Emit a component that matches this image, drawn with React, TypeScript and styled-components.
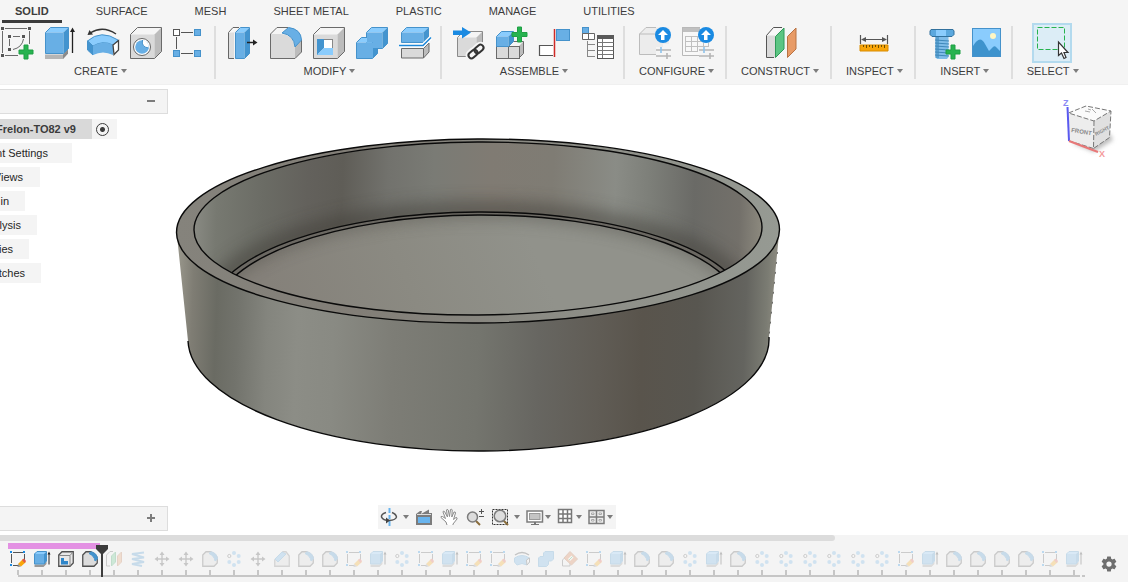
import React from "react";
import styled, { createGlobalStyle, css } from "styled-components";

const GlobalStyle = createGlobalStyle`
  * { box-sizing: border-box; }
  body {
    margin: 0;
    background: #ffffff;
    color: #3c3c3c;
    font-family: "Liberation Sans", Arial, sans-serif;
    font-size: 11px;
  }
  button {
    border: 0;
    margin: 0;
    padding: 0;
    background: none;
    color: inherit;
    font: inherit;
    cursor: pointer;
  }
  svg { display: block; overflow: visible; flex: none; }
`;

/* ---------- layout ---------- */

const Shell = styled.div`
  display: flex;
  flex-direction: column;
  min-height: 100vh;
  overflow: hidden;
`;

const Header = styled.header`
  background: #f5f5f5;
  border-bottom: 1px solid #f0f0f0;
`;

const Tabs = styled.nav`
  display: flex;
  gap: 21px;
  padding-left: 2px;
`;

const Tab = styled.button<{ $active?: boolean }>`
  height: 23px;
  padding: 2px 13px 0;
  line-height: 18px;
  white-space: nowrap;
  border-bottom: 3px solid ${(p) => (p.$active ? "#3c3c3c" : "transparent")};
  font-weight: ${(p) => (p.$active ? "bold" : "normal")};
`;

const Toolbar = styled.div`
  display: flex;
  padding: 3px 0 5px;
`;

const Group = styled.section<{ $cut?: boolean }>`
  display: flex;
  flex-direction: column;
  align-items: center;
  flex: none;
  height: 53px;
  border-right: 2px solid #dedede;
  &:last-child { border-right: 0; }
  ${(p) => p.$cut && css`margin-left: -16px; & > div { padding-left: 17px; }`}
`;

const GroupIcons = styled.div`
  display: flex;
  gap: 11px;
  padding: 1px 9px 0 11px;
`;

const ToolButton = styled.button<{ $selected?: boolean }>`
  display: block;
  width: 32px;
  height: 32px;
  ${(p) =>
    p.$selected &&
    css`
      background: #dcedf6;
      box-shadow: 0 0 0 2px #dcedf6, 0 0 0 4px #b3daee;
    `}
`;

const GroupLabel = styled.button`
  display: flex;
  align-items: center;
  gap: 3px;
  height: 16px;
  margin-top: 4px;
  padding: 0 11px 0 14px;
  white-space: nowrap;
`;

const Canvas = styled.main`
  flex: 1;
  display: flex;
  flex-direction: column;
  justify-content: space-between;
  padding: 4px 0;
`;

const Stage = styled.div`
  display: flex;
  align-items: flex-start;
`;

const Browser = styled.aside`
  width: 168px;
  flex: none;
`;

const PanelBar = styled.div`
  display: flex;
  align-items: center;
  justify-content: flex-end;
  width: 168px;
  height: 25px;
  padding-right: 11px;
  background: #f4f4f4;
  border: 1px solid #dddddd;
  border-left: 0;
`;

const Tree = styled.ul`
  display: flex;
  flex-direction: column;
  gap: 4px;
  margin: 5px 0 0;
  padding: 0;
  list-style: none;
`;

const TreeRow = styled.li`
  display: flex;
  height: 20px;
`;

const TreeLabel = styled.button<{ $width: number; $pad: number; $root?: boolean }>`
  display: flex;
  align-items: center;
  justify-content: flex-end;
  overflow: hidden;
  width: ${(p) => p.$width}px;
  padding-right: ${(p) => p.$pad}px;
  background: ${(p) => (p.$root ? "#d9d9d9" : "#f4f4f4")};
  font-weight: ${(p) => (p.$root ? "bold" : "normal")};
  white-space: nowrap;
  color: ${(p) => (p.$root ? "#3c3c3c" : "#262626")};
`;

const Activate = styled.label`
  display: flex;
  align-items: center;
  width: 25px;
  padding-left: 4px;
  background: #f4f4f4;
  input {
    appearance: none;
    width: 13px;
    height: 13px;
    margin: 0;
    border: 1px solid #3c3c3c;
    border-radius: 50%;
    background: radial-gradient(circle, #3c3c3c 2px, transparent 3px);
  }
`;

const ModelArea = styled.div`
  flex: 1;
  padding: 41px 0 0 2px;
`;

const CubeArea = styled.div`
  padding: 5px 10px 0 0;
`;

const BottomRow = styled.div`
  display: flex;
  align-items: flex-end;
  height: 26px;
`;

const ViewBar = styled.div`
  display: flex;
  align-items: center;
  align-self: flex-start;
  gap: 6px;
  height: 24px;
  margin-left: 210px;
  padding: 0 3px 0 2px;
  background: #f4f4f4;
`;

const ViewButton = styled.button<{ $gap?: number; $roomy?: boolean }>`
  display: flex;
  align-items: center;
  gap: ${(p) => p.$gap ?? 1}px;
  padding: 0 ${(p) => (p.$roomy ? 1 : 0)}px;
`;

const Footer = styled.footer`
  background: #f4f4f4;
  height: 47px;
`;

const ScrollThumb = styled.div`
  width: 74%;
  height: 6px;
  background: #dcdcdc;
  border-radius: 0 3px 3px 0;
`;

const TimelineRow = styled.div`
  display: flex;
  justify-content: space-between;
  padding-top: 2px;
`;

const Strip = styled.div`
  position: relative;
  flex: none;
  padding-left: 6px;
`;

const GroupBand = styled.div`
  width: 92px;
  height: 6px;
  margin-left: 2px;
  background: #e391e3;
`;

const Features = styled.ol`
  display: flex;
  margin: 0;
  padding: 2px 0 0;
  list-style: none;
`;

const Feature = styled.li`
  display: flex;
  flex-direction: column;
  align-items: center;
  gap: 3px;
  width: 24px;
  &::after {
    content: "";
    width: 2px;
    height: 5px;
    background: #c6c6c6;
  }
`;

const FeatureButton = styled.button<{ $pending: boolean }>`
  width: 16px;
  height: 16px;
  opacity: ${(p) => (p.$pending ? 0.25 : 1)};
`;

const Rail = styled.div`
  display: flex;
  gap: 2px;
  padding: 0 1px 0 12px;
  &::before { content: ""; flex: 1; height: 2px; background: #c6c6c6; }
  &::after { content: ""; width: 3px; height: 2px; background: #c6c6c6; }
`;

const Marker = styled.div`
  position: absolute;
  left: 96px;
  top: 2px;
`;

const SettingsButton = styled.button`
  width: 18px;
  height: 18px;
  margin: 12px 10px 0 0;
`;

/* ---------- shared drawing parts ---------- */

const B = { top: "#8accfd", mid: "#68afe5", dark: "#4394cf", line: "#4592cb" };
const G = { top: "#f5f5f5", mid: "#dadada", dark: "#bcbcbc", line: "#6a6a6a" };

const Caret = () => (
  <svg width="6" height="4" viewBox="0 0 6 4">
    <path d="M0 0H6L3 4Z" fill="#7c7c7c" />
  </svg>
);

type Palette = { top: string; mid: string; dark: string; line: string };

function Box({ x, y, w, h, d, c }: { x: number; y: number; w: number; h: number; d: number; c: Palette }) {
  return (
    <g>
      <path d={`M${x} ${y + d}l${d} ${-d}h${w}l${-d} ${d}z`} fill={c.top} />
      <path d={`M${x} ${y + d}h${w}v${h}h${-w}z`} fill={c.mid} />
      <path d={`M${x + w} ${y + d}l${d} ${-d}v${h}l${-d} ${d}z`} fill={c.dark} />
      <path d={`M${x} ${y + d}l${d} ${-d}h${w}v${h}l${-d} ${d}h${-w}z`} fill="none" stroke={c.line} />
    </g>
  );
}

const Plus = ({ x, y, s = 14 }: { x: number; y: number; s?: number }) => {
  const a = (s - 4) / 2;
  return (
    <path
      d={`M${x + a} ${y}h4v${a}h${a}v4h${-a}v${a}h-4v${-a}h${-a}v-4h${a}z`}
      fill="#27b34f"
      stroke="#1f9f45"
      strokeWidth="1"
    />
  );
};

const Svg32 = ({ children }: { children: React.ReactNode }) => (
  <svg width="32" height="32" viewBox="0 0 32 32">{children}</svg>
);
const Svg16 = ({ children }: { children: React.ReactNode }) => (
  <svg width="16" height="16" viewBox="0 0 16 16">{children}</svg>
);
const Svg18 = ({ children }: { children: React.ReactNode }) => (
  <svg width="18" height="18" viewBox="0 0 18 18">{children}</svg>
);

/* ---------- toolbar icons ---------- */

const SketchIcon = () => (
  <Svg32>
    <path d="M4 1.5H26M1.5 4V26M28.5 4V17M4 28.5H17" stroke="#6a6a6a" fill="none" />
    <path d="M12 9.5H19M8.5 12V19M22.5 12Q21 20.500 12 22.500" stroke="#6a6a6a" fill="none" />
    <path d="M0 0h3v3h-3zM27 0h3v3h-3zM0 27h3v3h-3zM7 8h3v3h-3zM21 8h3v3h-3zM7 21h3v3h-3z" fill="#555" />
    <Plus x={18} y={18} />
  </Svg32>
);

const ExtrudeIcon = () => (
  <Svg32>
    <path d="M1 27.500h18l5-5v4l-5 5.500h-18z" fill="#b5b5b5" />
    <path d="M19 27.500l5-5v4l-5 5.500z" fill="#8a8a8a" />
    <Box x={1.5} y={0.5} w={18} h={21} d={5} c={B} />
    <path d="M28.500 4V26" stroke="#222" strokeWidth="1.3" />
    <path d="M26 5L28.500 0.500L31 5z" fill="#222" />
  </Svg32>
);

const RevolveIcon = () => (
  <Svg32>
    <path d="M3 6Q16 -2 29 7" stroke="#333" fill="none" strokeWidth="1.400" />
    <path d="M0.500 8L2.500 3L6 7.500z" fill="#333" />
    <path d="M0.500 14Q14 2 31 13L26 18Q16 13 6 19z" fill={B.top} stroke={B.line} />
    <path d="M0.500 14L6 19V28L0.500 23z" fill={B.dark} stroke={B.line} />
    <path d="M6 19Q16 13 26 18V28Q16 23 6 28z" fill={B.mid} />
    <path d="M26 18L31.500 13.500V23L27 27.500z" fill="#fff" stroke="#444" strokeWidth="1.300" />
  </Svg32>
);

const HoleIcon = () => (
  <Svg32>
    <Box x={0.5} y={0.5} w={24} h={24} d={7} c={G} />
    <circle cx="12" cy="20" r="8.500" fill="#fff" stroke="#666" />
    <circle cx="12" cy="20" r="6.800" fill={B.mid} />
    <path d="M12.500 13Q11 20 18.600 21A6.800 6.800 0 0 0 12.500 13z" fill="#fff" />
    <path d="M12.500 13Q11 20 18.600 21" stroke={B.line} fill="none" />
  </Svg32>
);

const PatternIcon = () => (
  <Svg32>
    <path d="M8 5.500H20M8 26.500H20M3.500 10V22" stroke="#555" />
    <rect x="0.500" y="2.500" width="6" height="6" fill="#fff" stroke="#555" />
    <g fill={B.mid} stroke={B.line}>
      <rect x="21.500" y="2.500" width="6" height="6" />
      <rect x="0.500" y="23.500" width="6" height="6" />
      <rect x="21.500" y="23.500" width="6" height="6" />
    </g>
  </Svg32>
);

const PressPullIcon = () => (
  <Svg32>
    <path d="M1.500 5.500L6 0.500H13L7 5.500V31.500H1.500z" fill="#dedede" />
    <path d="M1.500 5.500L6 0.500H12L7 5.500z" fill="#f7f7f7" />
    <path d="M12 0.500H6L1.500 5.500V31.500H7" fill="none" stroke="#666" />
    <Box x={8.5} y={0.5} w={9} h={26} d={5} c={B} />
    <path d="M20 15.500H27" stroke="#222" strokeWidth="1.500" />
    <path d="M26 12.500L30.500 15.500L26 18.500z" fill="#222" />
  </Svg32>
);

const FilletIcon = () => (
  <Svg32>
    <path d="M0.500 7L7 0.500H19L12 6z" fill="#f5f5f5" />
    <path d="M0.500 7H11Q24 8 25 21V31.500H0.500z" fill={G.mid} />
    <path d="M25 20L31.500 13V25L25 31.500z" fill={G.dark} />
    <path d="M18 0.500H7L0.500 7V31.500H25L31.500 25V13" fill="none" stroke={G.line} />
    <path d="M12 6L18.500 0.500Q31 2 31.500 13L25 20Q24 8 12 6z" fill={B.mid} stroke={B.line} />
  </Svg32>
);

const ShellIcon = () => (
  <Svg32>
    <Box x={0.5} y={0.5} w={24} h={24} d={7} c={G} />
    <rect x="4.500" y="12.500" width="15" height="15" fill="#fff" stroke="#888" />
    <path d="M4 12H11V21L4 28z" fill={B.dark} />
    <path d="M11 21H20V28H4z" fill={B.top} />
  </Svg32>
);

const CombineIcon = () => (
  <Svg32>
    <Box x={10.5} y={0.5} w={16} h={16} d={5} c={B} />
    <Box x={0.5} y={10.5} w={16} h={16} d={5} c={B} />
    <path d="M11 6H26V21H17V15H11z" fill={B.mid} />
    <path d="M1 16H17V31H1z" fill={B.mid} />
  </Svg32>
);

const SplitIcon = () => (
  <Svg32>
    <path d="M2.500 21.500h22v9.500h-22z" fill={G.mid} stroke={G.line} />
    <path d="M24.500 21.500L30 16V25L24.500 31z" fill={G.dark} stroke={G.line} />
    <Box x={2.5} y={0.5} w={22} h={10} d={5} c={B} />
    <path d="M0 18.500H24L32 10.500" fill="none" stroke="#fff" strokeWidth="4" />
    <path d="M0 18.500H24L32 10.500" fill="none" stroke="#1b86d8" strokeWidth="1.500" />
  </Svg32>
);

const DeriveIcon = () => (
  <Svg32>
    <Box x={4.5} y={4.5} w={19} h={19} d={6} c={{ ...G, line: "#8a8a8a" }} />
    <path d="M0 3.500H9V0L18 5.500L9 11.500V8H0z" fill="#1a8ae2" />
    <g fill="none" stroke="#f5f5f5" strokeWidth="6">
      <rect x="15" y="24" width="10" height="6" rx="3" transform="rotate(-42 20 27)" />
      <rect x="21" y="19" width="10" height="6" rx="3" transform="rotate(-42 26 22)" />
    </g>
    <g fill="none" stroke="#333" strokeWidth="2">
      <rect x="15" y="24" width="10" height="6" rx="3" transform="rotate(-42 20 27)" />
      <rect x="21" y="19" width="10" height="6" rx="3" transform="rotate(-42 26 22)" />
    </g>
  </Svg32>
);

const NewComponentIcon = () => (
  <Svg32>
    <Box x={12.5} y={14.5} w={10} h={12} d={5} c={G} />
    <rect x="0.500" y="19.500" width="12" height="12" fill={G.mid} stroke={G.line} />
    <rect x="12.500" y="19.500" width="11" height="12" fill={G.mid} stroke={G.line} />
    <Box x={0.5} y={4.5} w={12} h={10} d={5} c={B} />
    <Plus x={16} y={0} s={15} />
  </Svg32>
);

const JointIcon = () => (
  <Svg32>
    <path d="M14 18.500H0.500V28.500H14" fill="#fff" stroke="#555" strokeWidth="1.200" />
    <path d="M15.500 2V30" stroke="#cf2a27" strokeWidth="1.500" />
    <rect x="17.500" y="2.500" width="13" height="11" fill={B.mid} stroke={B.line} />
  </Svg32>
);

const BomIcon = () => (
  <Svg32>
    <path d="M5.500 14V30M5.500 17.500H13M5.500 23.500H13M5.500 29.500H13" stroke="#888" fill="none" />
    <rect x="0.500" y="0.500" width="6" height="6" fill={B.mid} stroke={B.line} />
    <path d="M0.500 6.500h12v6h-12zM6.500 6.500v6" fill="#fff" stroke="#666" />
    <rect x="15.500" y="9" width="16" height="22.500" fill="#fff" stroke="#555" />
    <path d="M15 8h17v4h-17z" fill="#5a5a5a" />
    <path d="M15.500 15.500h16M15.500 19.500h16M15.500 23.500h16M15.500 27.500h16M20.500 12V31" stroke="#777" />
  </Svg32>
);

const Badge = () => (
  <g>
    <circle cx="24" cy="8" r="8" fill="#1a8ae2" />
    <path d="M24 3L29 8H25.500V13H22V8H19z" fill="#fff" />
    <path d="M17 23H32M17 29H32" stroke="#b5b5b5" strokeWidth="1.600" />
    <path d="M22 20V26" stroke="#8ec3ec" strokeWidth="1.600" />
    <path d="M28 26V32" stroke="#b5b5b5" strokeWidth="1.600" />
  </g>
);

const ConfigureIcon = () => (
  <Svg32>
    <path d="M0.500 7L7 0.500H30V17H24V20H17V27.500H0.500z" fill="#ececec" />
    <path d="M17 27.500H0.500V7L7 0.500H17M0.500 7H16" fill="none" stroke="#bcbcbc" />
    <Badge />
  </Svg32>
);

const ConfigTableIcon = () => (
  <Svg32>
    <path d="M0.500 0.500H28V18H17V28H0.500z" fill="#f8f8f8" />
    <path d="M0 0H18V5H0z" fill="#c0c0c0" />
    <path d="M17 28.500H0.500V0.500H18" fill="none" stroke="#b8b8b8" />
    <path d="M3.500 9.500H18M3.500 14.500H26M3.500 19.500H26M3.500 24.500H16M3.500 9V25M9.500 9V25M15.500 9V25M21.500 16V20M26.500 16V20" stroke="#c0c0c0" />
    <Badge />
  </Svg32>
);

const ConstructIcon = () => (
  <Svg32>
    <path d="M2.500 8.500L9.500 0.500H19L11 8.500V30.500H2.500z" fill="#dadada" />
    <path d="M2.500 8.500L9.500 0.500H19L11 8.500z" fill="#f8f8f8" />
    <path d="M18 0.500H9.500L2.500 8.500V30.500H10" fill="none" stroke="#555" />
    <path d="M11.500 9.500L20 1V22L11.500 30.500z" fill="#5cc583" stroke="#2f9a58" />
    <path d="M23.500 9.500L32 1V22L23.500 30.500z" fill="#e89b66" stroke="#b97243" />
  </Svg32>
);

const MeasureIcon = () => (
  <Svg32>
    <path d="M2.500 8V17M29.500 8V17M5 12.500H27" stroke="#555" strokeWidth="1.200" />
    <path d="M3 12.500L8 10V15zM29 12.500L24 10V15z" fill="#555" />
    <path d="M2 18H30V24H2z" fill="#f9a60a" stroke="#d98c00" />
    <path d="M5.500 18v2M8.500 18v3M11.500 18v2M14.500 18v3M17.500 18v2M20.500 18v3M23.500 18v2M26.500 18v3" stroke="#705000" />
  </Svg32>
);

const FastenerIcon = () => (
  <Svg32>
    <path d="M8.500 9H21.500V30L20 32H10L8.500 30z" fill="#7fbce8" />
    <path d="M8.500 9H12V31H8.500z" fill="#589fcf" />
    <path d="M8 13l14 1M8 16l14 1M8 19l14 1M8 22l14 1M8 25l14 1M8 28l14 1" stroke="#3f88ba" />
    <path d="M4 2.500H26L27 4V7.500L25 9.500H5L3 7.500V4z" fill="#5ba8de" stroke="#32719d" />
    <path d="M9 3H19V9H9z" fill="#8accfd" />
    <Plus x={19} y={18} />
  </Svg32>
);

const ImageIcon = () => (
  <Svg32>
    <rect x="2.500" y="1.500" width="28" height="28" fill="#8accfd" stroke={B.line} />
    <circle cx="23" cy="9" r="3" fill="#fff6c4" />
    <path d="M3 19Q10 7 15 17L19 24L23 20Q25 18 27 21L30 24V29H3z" fill="#3e93cd" />
  </Svg32>
);

const SelectIcon = () => (
  <Svg32>
    <rect x="1.500" y="0.500" width="27" height="22" fill="none" stroke="#27b34f" strokeDasharray="5 2" />
    <path d="M22.500 15V28.500L25.500 26L28 31.500L30 30.500L28 25.500H32z" fill="#fff" stroke="#333" strokeWidth="1.200" />
  </Svg32>
);

/* ---------- timeline icons ---------- */

const SketchFeature = () => (
  <Svg16>
    <path d="M3 1.500H13M1.500 3V12M14.500 3V9M3 14.500H8" stroke="#555" fill="none" />
    <path d="M0 0h2v2h-2zM13 0h2v2h-2zM0 13h2v2h-2z" fill="#1a8ae2" />
    <path d="M8 13L13 8L16 11L11 15.500z" fill="#f9a60a" />
    <path d="M12 9L14 7.500L16 10L14.500 12z" fill="#e2574c" />
    <path d="M8 13L11 15.500L7.500 16z" fill="#8a8a8a" />
  </Svg16>
);

const ExtrudeFeature = () => (
  <Svg16>
    <path d="M0.500 13.500h9l3-3v2.500l-3 3h-9z" fill="#999" />
    <rect x="0.500" y="2.500" width="10" height="10.500" fill={B.mid} />
    <path d="M0.500 3L3 0.500H12.500L10 3z" fill={B.top} />
    <path d="M10 3L12.500 0.500V10L10 13z" fill={B.dark} />
    <path d="M0.500 3L3 0.500H12.500V10L10 13H0.500z" fill="none" stroke={B.line} />
    <path d="M15 2V13.500" stroke="#222" />
    <path d="M13.500 3.500L15 0.500L16.500 3.500z" fill="#222" />
  </Svg16>
);

const ShellFeature = () => (
  <Svg16>
    <path d="M0.750 4L4 0.750H15.250V12L12 15.250H0.750z" fill="#e8e8e8" stroke="#505050" strokeWidth="1.300" />
    <path d="M12 4.500L15 1M12 4.500V15M1 4.500H12" stroke="#888" />
    <path d="M3 7H6V10H10V13.500H3z" fill="#2f86c9" />
  </Svg16>
);

const FilletFeature = () => (
  <Svg16>
    <path d="M0.750 4L4 0.750H9Q15 3 15.250 8V12L12 15.250H0.750z" fill="#dcdcdc" stroke="#505050" strokeWidth="1.300" />
    <path d="M7 2.500L9 0.750Q15 2 15.500 8L13 10Q12.500 5 7 2.500z" fill={B.dark} stroke={B.line} />
  </Svg16>
);

const ChamferFeature = () => (
  <Svg16>
    <path d="M0.750 9L9 0.750H12L15.250 5V15.250H0.750z" fill="#dcdcdc" stroke="#777" strokeWidth="1.300" />
    <path d="M1 8L8 1L12 3L4 11z" fill={B.mid} stroke={B.line} />
  </Svg16>
);

const PlaneFeature = () => (
  <Svg16>
    <path d="M0.500 15V4L4 0.500H7M0.500 15H4" fill="none" stroke="#555" />
    <path d="M5.500 5L9.500 1V11L5.500 15z" fill="#5cc583" stroke="#2f9a58" />
    <path d="M11.500 5L15.500 1V11L11.500 15z" fill="#e89b66" stroke="#b97243" />
  </Svg16>
);

const CoilFeature = () => (
  <Svg16>
    <path d="M14 1.500L2 3L14 6.500L2 8L14 11L2 13L12 15" fill="none" stroke={B.dark} strokeWidth="2" />
  </Svg16>
);

const MoveFeature = () => (
  <Svg16>
    <path d="M8 2V14M2 8H14" stroke="#444" strokeWidth="1.400" />
    <path d="M5.500 4L8 0.500L10.500 4zM5.500 12L8 15.500L10.500 12zM4 5.500L0.500 8L4 10.500zM12 5.500L15.500 8L12 10.500z" fill="#444" />
  </Svg16>
);

const PatternFeature = () => (
  <Svg16>
    <g fill={B.mid}>
      <circle cx="8" cy="2" r="2" />
      <circle cx="12.700" cy="5" r="2" />
      <circle cx="12.700" cy="11" r="2" />
      <circle cx="8" cy="14" r="2" />
      <circle cx="3.300" cy="11" r="2" />
    </g>
    <circle cx="3.300" cy="5" r="1.600" fill="#fff" stroke="#555" />
  </Svg16>
);

const RevolveFeature = () => (
  <Svg16>
    <path d="M1 4Q8 -1 15 4" stroke="#333" fill="none" strokeWidth="1.300" />
    <path d="M0.500 7Q8 2 15.500 7V11L13 14Q8 11 3 14L0.500 11z" fill={B.mid} stroke={B.line} />
    <path d="M12.500 9L15.500 7V11L13 14z" fill="#fff" stroke="#444" />
  </Svg16>
);

const CombineFeature = () => (
  <Svg16>
    <path d="M0.500 7L2 5.500H5.500V2L7 0.500H15.500V8L13.500 10H10.500V13.500L8.500 15.500H0.500z" fill={B.mid} stroke={B.line} />
  </Svg16>
);

const RemoveFeature = () => (
  <Svg16>
    <path d="M0.500 15V9L4 5.500M0.500 15H8V11" fill="none" stroke="#555" />
    <path d="M8 0.500L15.500 8L9.500 14L2 7z" fill="#d9783f" stroke="#b0602e" />
    <path d="M7 9L10.500 5.500" stroke="#fff" strokeWidth="3" fill="none" />
    <path d="M7 9L10.500 5.500" stroke="#27b34f" strokeWidth="1" fill="none" />
  </Svg16>
);

const featureIcons = {
  s: ["Sketch", SketchFeature],
  e: ["Extrude", ExtrudeFeature],
  h: ["Shell", ShellFeature],
  f: ["Fillet", FilletFeature],
  p: ["Plane", PlaneFeature],
  c: ["Coil", CoilFeature],
  m: ["Move", MoveFeature],
  o: ["Pattern", PatternFeature],
  b: ["Chamfer", ChamferFeature],
  r: ["Revolve", RevolveFeature],
  j: ["Combine", CombineFeature],
  x: ["Remove", RemoveFeature],
} as const;

const history = "sehfpcmmfombffseosessrjxseffoefooooooseffffse".split("") as (keyof typeof featureIcons)[];
const APPLIED = 4;

/* ---------- viewport drawings ---------- */

const Model = () => (
  <svg width="620" height="330" viewBox="170 130 620 330" role="img" aria-label="Round container body">
    <defs>
      <linearGradient id="wall" gradientUnits="userSpaceOnUse" x1="176" y1="340" x2="780" y2="362">
        <stop offset="0" stopColor="#97958a" />
        <stop offset="0.025" stopColor="#7f7d74" />
        <stop offset="0.065" stopColor="#6a6b63" />
        <stop offset="0.1" stopColor="#72736c" />
        <stop offset="0.15" stopColor="#84857e" />
        <stop offset="0.2" stopColor="#8c8d86" />
        <stop offset="0.26" stopColor="#898a83" />
        <stop offset="0.36" stopColor="#7d7d76" />
        <stop offset="0.5" stopColor="#74756e" />
        <stop offset="0.6" stopColor="#676661" />
        <stop offset="0.7" stopColor="#605c55" />
        <stop offset="0.77" stopColor="#59544c" />
        <stop offset="0.86" stopColor="#585650" />
        <stop offset="0.94" stopColor="#64645f" />
        <stop offset="0.975" stopColor="#7b7c73" />
        <stop offset="1" stopColor="#989488" />
      </linearGradient>
      <linearGradient id="rim" gradientUnits="userSpaceOnUse" x1="176" y1="240" x2="780" y2="220">
        <stop offset="0" stopColor="#85837c" />
        <stop offset="0.3" stopColor="#827e77" />
        <stop offset="0.6" stopColor="#8b8b84" />
        <stop offset="1" stopColor="#969a93" />
      </linearGradient>
      <linearGradient id="inside" gradientUnits="userSpaceOnUse" x1="194" y1="200" x2="762" y2="222">
        <stop offset="0" stopColor="#8a8b84" />
        <stop offset="0.04" stopColor="#777971" />
        <stop offset="0.12" stopColor="#6b6c65" />
        <stop offset="0.2" stopColor="#63615c" />
        <stop offset="0.26" stopColor="#5f5d57" />
        <stop offset="0.34" stopColor="#72726d" />
        <stop offset="0.42" stopColor="#7a7b75" />
        <stop offset="0.52" stopColor="#807b73" />
        <stop offset="0.63" stopColor="#7f7c74" />
        <stop offset="0.74" stopColor="#8a8c86" />
        <stop offset="0.8" stopColor="#7d7f79" />
        <stop offset="0.88" stopColor="#6a6a66" />
        <stop offset="0.96" stopColor="#73706a" />
        <stop offset="1" stopColor="#8c897e" />
      </linearGradient>
      <linearGradient id="floor" gradientUnits="userSpaceOnUse" x1="280" y1="310" x2="520" y2="215">
        <stop offset="0" stopColor="#85817a" />
        <stop offset="0.5" stopColor="#8b8a82" />
        <stop offset="1" stopColor="#91928b" />
      </linearGradient>
      <clipPath id="opening">
        <ellipse cx="478" cy="228.500" rx="284" ry="86.500" />
      </clipPath>
      <clipPath id="base">
        <ellipse cx="478" cy="313" rx="264" ry="98" />
      </clipPath>
      <filter id="soft" filterUnits="userSpaceOnUse" x="170" y="130" width="620" height="330">
        <feGaussianBlur stdDeviation="8" />
      </filter>
    </defs>
    <path d="M176.500 231L188 341A290.500 112 0 0 0 769 337L779.500 229z" fill="url(#wall)" />
    <path d="M188 341A290.500 112 0 0 0 769 337" fill="none" stroke="#0a0a0a" strokeWidth="1.400" />
    <path d="M777.500 252L769 337" fill="none" stroke="#3a3a36" strokeWidth="0.700" strokeDasharray="2 8" />
    <g transform="rotate(-0.3 478 230)">
      <ellipse cx="478" cy="231" rx="301.500" ry="92" fill="url(#rim)" stroke="#0a0a0a" strokeWidth="1.400" />
      <ellipse cx="478" cy="228.500" rx="284" ry="86.500" fill="url(#inside)" />
      <g clipPath="url(#opening)">
        <ellipse cx="478" cy="310" rx="270" ry="99" fill="none" stroke="#3d3b36" strokeWidth="20" opacity="0.5" filter="url(#soft)" />
        <ellipse cx="478" cy="310" rx="268" ry="98" fill="#6b6862" stroke="#0a0a0a" strokeWidth="1.400" />
        <ellipse cx="478" cy="313" rx="264" ry="98" fill="url(#floor)" />
        <g clipPath="url(#base)">
          <ellipse cx="478" cy="313" rx="270" ry="102" fill="none" stroke="#55534d" strokeWidth="14" opacity="0.55" filter="url(#soft)" />
        </g>
        <ellipse cx="478" cy="313" rx="264" ry="98" fill="none" stroke="#0a0a0a" strokeWidth="1.400" />
      </g>
      <ellipse cx="478" cy="228.500" rx="284" ry="86.500" fill="none" stroke="#0a0a0a" strokeWidth="1.400" />
    </g>
  </svg>
);

const ViewCube = () => (
  <svg width="60" height="70" viewBox="1058 94 60 70" role="img" aria-label="View cube">
    <defs>
      <filter id="cubeShadow" x="-50%" y="-50%" width="200%" height="200%">
        <feGaussianBlur stdDeviation="2" />
      </filter>
    </defs>
    <path d="M1072 143L1094 152L1113 140L1110 134z" fill="#bdbdbd" filter="url(#cubeShadow)" />
    <path d="M1068.500 113L1086 106L1111 111L1094 121z" fill="#fbfbfb" />
    <path d="M1068.500 113L1094 121L1093.500 148.500L1069.500 141z" fill="#ededed" />
    <path d="M1094 121L1111 111L1109.500 137.500L1093.500 148.500z" fill="#e0e0e0" />
    <path d="M1068.500 113L1086 106L1111 111L1094 121zM1094 121L1093.500 148.500L1109.500 137.500L1111 111M1093.500 148.500L1069.500 141" fill="none" stroke="#777" strokeDasharray="5 2" />
    <path d="M1085 111L1090 112M1092 109L1096 113M1088 109L1091 110" stroke="#aaa" />
    <text x="1071" y="132" fontSize="6" fontWeight="bold" fill="#8a8a8a" transform="rotate(9 1071 132)">FRONT</text>
    <text x="1096" y="136" fontSize="5" fontWeight="bold" fill="#8a8a8a" transform="rotate(-28 1096 136)">RIGHT</text>
    <path d="M1067.500 107L1069 141" stroke="#5a5af0" strokeWidth="2" />
    <path d="M1069 141L1098 152" stroke="#e87878" strokeWidth="2" />
    <text x="1063" y="106" fontSize="9" fontWeight="bold" fill="#8a8af5">Z</text>
    <text x="1099" y="157" fontSize="9" fontWeight="bold" fill="#f59a9a">X</text>
  </svg>
);

/* ---------- view bar icons ---------- */

const OrbitIcon = () => (
  <Svg18>
    <path d="M9.500 0V5M9.500 7V11M9.500 13V18" stroke="#68b4ee" strokeWidth="2" />
    <path d="M6 4.500Q1 6 1.500 9Q3 12.500 9 12.500Q16 12 16.500 9Q16 6 12 4.500" fill="none" stroke="#555" strokeWidth="1.500" />
    <path d="M6 9.500L10 12.500L6 15.500z" fill="#444" />
  </Svg18>
);
const LookAtIcon = () => (
  <Svg18>
    <path d="M1 6L5 3H7L6 6L14 1.500V5H17V17H1z" fill="#7c7c7c" />
    <path d="M2 6.500H16" stroke="#ddd" />
    <rect x="3" y="9" width="12" height="6" fill="#68b4ee" />
  </Svg18>
);
const PanIcon = () => (
  <Svg18>
    <path
      d="M7 17L6 14L1 9.500Q0.500 8 2.500 8.500L5.500 10.500L3 4Q3 2.500 4.500 3.500L7.500 9L6.500 2Q7 0.500 8.200 2L9.500 8.500L10.500 1.500Q11.500 0.500 12.200 2L11.800 9L14 4Q15.500 3.500 15.500 5L13.500 11.500L16 9.500Q17.500 9.500 17 11L13 16V17"
      fill="#fff"
      stroke="#8a8a8a"
    />
  </Svg18>
);
const ZoomIcon = () => (
  <Svg18>
    <path d="M10 13L14 17" stroke="#8a6d3b" strokeWidth="2" />
    <circle cx="6.500" cy="9" r="5" fill="#ddd" stroke="#7c7c7c" strokeWidth="1.500" />
    <path d="M13 3.500H18M15.500 1V6M13 8.500H18" stroke="#555" />
  </Svg18>
);
const FitIcon = () => (
  <Svg18>
    <rect x="1.500" y="1.500" width="15" height="15" fill="none" stroke="#333" strokeDasharray="2 1" />
    <path d="M12 12L17 17" stroke="#8a6d3b" strokeWidth="2" />
    <circle cx="9" cy="8" r="5.800" fill="#ddd" stroke="#7c7c7c" strokeWidth="1.500" />
  </Svg18>
);
const DisplayIcon = () => (
  <Svg18>
    <rect x="1" y="3" width="15.500" height="11" fill="#fff" stroke="#7c7c7c" strokeWidth="1.500" />
    <rect x="3.500" y="5.500" width="10.500" height="6" fill="#c4c4c4" stroke="#999" />
    <path d="M8 14H10V16H13V17H5V16H8z" fill="#777" />
  </Svg18>
);
const GridIcon = () => (
  <Svg18>
    <path d="M1.500 1.500h13v13h-13zM6 1V15M10.500 1V15M1 6H15M1 10.500H15" fill="#fff" stroke="#777" strokeWidth="1.500" />
  </Svg18>
);
const ViewportsIcon = () => (
  <Svg18>
    <rect x="1" y="2.500" width="15" height="13" fill="#ececec" stroke="#7c7c7c" strokeWidth="1.500" />
    <path d="M8.500 2V16M1 9H16" stroke="#7c7c7c" strokeWidth="1.500" />
    <path d="M3.500 5h2.500v1.500h-2.500zM11 5h2.500v1.500h-2.500zM3.500 11.500h2.500v1.500h-2.500zM11 11.500h2.500v1.500h-2.500z" fill="#fff" stroke="#aaa" />
  </Svg18>
);

/* ---------- data ---------- */

const tabs = ["SOLID", "SURFACE", "MESH", "SHEET METAL", "PLASTIC", "MANAGE", "UTILITIES"];

const groups: { label: string; icons: [string, React.FC][] }[] = [
  { label: "CREATE", icons: [["Create sketch", SketchIcon], ["Extrude", ExtrudeIcon], ["Revolve", RevolveIcon], ["Hole", HoleIcon], ["Pattern", PatternIcon]] },
  { label: "MODIFY", icons: [["Press pull", PressPullIcon], ["Fillet", FilletIcon], ["Shell", ShellIcon], ["Combine", CombineIcon], ["Split body", SplitIcon]] },
  { label: "ASSEMBLE", icons: [["Derive", DeriveIcon], ["New component", NewComponentIcon], ["Joint", JointIcon], ["Bill of materials", BomIcon]] },
  { label: "CONFIGURE", icons: [["Configure", ConfigureIcon], ["Configuration table", ConfigTableIcon]] },
  { label: "CONSTRUCT", icons: [["Offset plane", ConstructIcon]] },
  { label: "INSPECT", icons: [["Measure", MeasureIcon]] },
  { label: "INSERT", icons: [["Insert fastener", FastenerIcon], ["Canvas", ImageIcon]] },
  { label: "SELECT", icons: [["Select", SelectIcon]] },
];

const tree = [
  { text: "nt Settings", width: 72, pad: 24 },
  { text: "Views", width: 40, pad: 17 },
  { text: "in", width: 25, pad: 16 },
  { text: "lysis", width: 37, pad: 16 },
  { text: "ies", width: 29, pad: 16 },
  { text: "tches", width: 41, pad: 16 },
];

export default function App() {
  return (
    <Shell>
      <GlobalStyle />
      <Header>
        <Tabs>
          {tabs.map((t, i) => (
            <Tab key={t} $active={i === 0}>{t}</Tab>
          ))}
        </Tabs>
        <Toolbar>
          {groups.map((g, i) => (
            <Group key={g.label} $cut={i === 0}>
              <GroupIcons>
                {g.icons.map(([name, Icon]) => (
                  <ToolButton key={name} aria-label={name} $selected={name === "Select"}>
                    <Icon />
                  </ToolButton>
                ))}
              </GroupIcons>
              <GroupLabel>
                {g.label}
                <Caret />
              </GroupLabel>
            </Group>
          ))}
        </Toolbar>
      </Header>

      <Canvas>
        <Stage>
          <Browser>
            <PanelBar>
              <button aria-label="Collapse browser">
                <svg width="10" height="10" viewBox="0 0 10 10"><path d="M1 3h8v2h-8z" fill="#7c7c7c" /></svg>
              </button>
            </PanelBar>
            <Tree>
              <TreeRow>
                <TreeLabel $width={92} $pad={16} $root>Frelon-TO82 v9</TreeLabel>
                <Activate>
                  <input type="radio" name="active" defaultChecked aria-label="Activate component" />
                </Activate>
              </TreeRow>
              {tree.map((r) => (
                <TreeRow key={r.text}>
                  <TreeLabel $width={r.width} $pad={r.pad}>{r.text}</TreeLabel>
                </TreeRow>
              ))}
            </Tree>
          </Browser>
          <ModelArea><Model /></ModelArea>
          <CubeArea><ViewCube /></CubeArea>
        </Stage>
        <BottomRow>
          <PanelBar>
            <button aria-label="Expand comments">
              <svg width="10" height="10" viewBox="0 0 10 10"><path d="M4 0h2v3h3v2h-3v3h-2v-3h-3v-2h3z" fill="#7c7c7c" /></svg>
            </button>
          </PanelBar>
          <ViewBar>
            <ViewButton aria-label="Orbit" $gap={5}><OrbitIcon /><Caret /></ViewButton>
            <ViewButton aria-label="Look at"><LookAtIcon /></ViewButton>
            <ViewButton aria-label="Pan" $roomy><PanIcon /></ViewButton>
            <ViewButton aria-label="Zoom" $roomy><ZoomIcon /></ViewButton>
            <ViewButton aria-label="Fit" $gap={5}><FitIcon /><Caret /></ViewButton>
            <ViewButton aria-label="Display settings"><DisplayIcon /><Caret /></ViewButton>
            <ViewButton aria-label="Grid and snaps"><GridIcon /><Caret /></ViewButton>
            <ViewButton aria-label="Viewports"><ViewportsIcon /><Caret /></ViewButton>
          </ViewBar>
        </BottomRow>
      </Canvas>

      <Footer>
        <ScrollThumb />
        <TimelineRow>
          <Strip>
            <GroupBand />
            <Features>
              {history.map((k, i) => {
                const [name, Icon] = featureIcons[k];
                return (
                  <Feature key={i}>
                    <FeatureButton aria-label={name} $pending={i >= APPLIED}>
                      <Icon />
                    </FeatureButton>
                  </Feature>
                );
              })}
            </Features>
            <Rail />
            <Marker>
              <svg width="12" height="32" viewBox="0 0 12 32">
                <path d="M0 0H12V4L7 9V32H5V9L0 4z" fill="#3c3c3c" />
              </svg>
            </Marker>
          </Strip>
          <SettingsButton aria-label="Timeline settings">
            <svg width="18" height="18" viewBox="0 0 24 24">
              <path
                fill="#6e6e6e"
                d="M19.430 12.980c.04-.32.07-.64.07-.98s-.03-.66-.07-.98l2.110-1.650c.19-.15.24-.42.12-.64l-2-3.460c-.12-.22-.39-.3-.61-.22l-2.490 1c-.52-.4-1.080-.73-1.690-.98l-.38-2.650A.488.488 0 0 0 14 2h-4c-.25 0-.46.18-.49.42l-.38 2.650c-.61.25-1.170.59-1.690.98l-2.490-1c-.23-.09-.49 0-.61.22l-2 3.460c-.13.22-.07.49.12.64l2.110 1.650c-.04.32-.07.65-.07.98s.03.66.07.98l-2.110 1.650c-.19.15-.24.42-.12.64l2 3.460c.12.22.39.3.61.22l2.490-1c.52.4 1.080.73 1.690.98l.38 2.650c.03.24.24.42.49.42h4c.25 0 .46-.18.49-.42l.38-2.650c.61-.25 1.170-.59 1.690-.98l2.490 1c.23.09.49 0 .61-.22l2-3.460c.12-.22.07-.49-.12-.64zM12 15.500A3.500 3.500 0 1 1 12 8.500a3.500 3.500 0 0 1 0 7z"
              />
            </svg>
          </SettingsButton>
        </TimelineRow>
      </Footer>
    </Shell>
  );
}
